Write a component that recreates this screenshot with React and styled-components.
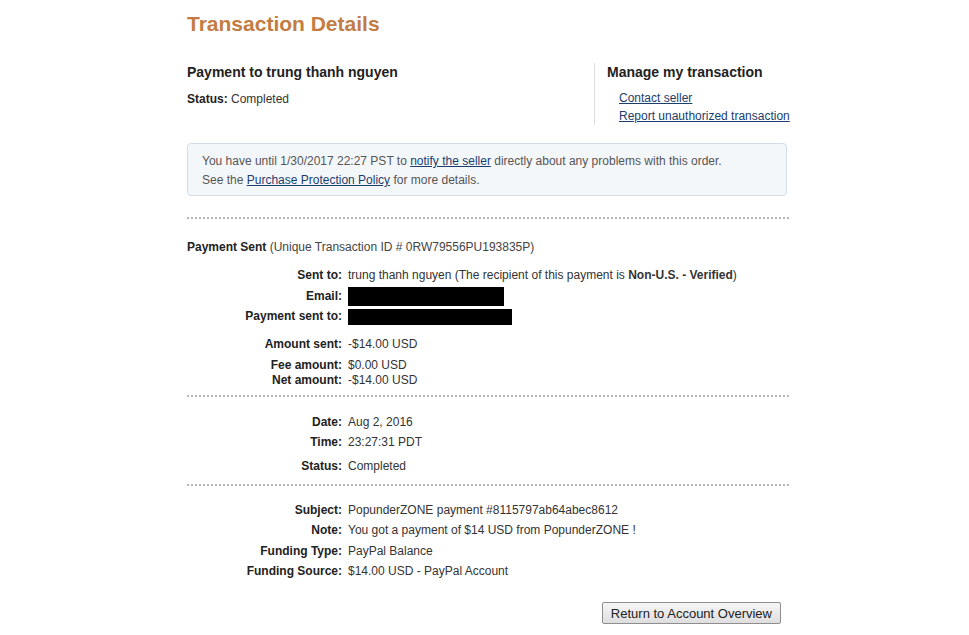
import React from "react";
import styled, { createGlobalStyle } from "styled-components";

const GlobalStyle = createGlobalStyle`
  body {
    margin: 0;
    background: #ffffff;
    font-family: "Liberation Sans", Arial, sans-serif;
    font-size: 12px;
    color: #333333;
  }
`;

// gap = space above the row, in px
const details = [
  {
    top: 12,
    bottom: 7,
    rows: [
      {
        label: "Sent to:",
        value: (
          <>
            trung thanh nguyen (The recipient of this payment is{" "}
            <b>Non-U.S. - Verified</b>)
          </>
        ),
      },
      { label: "Email:", redact: [156, 19], gap: 6 },
      { label: "Payment sent to:", redact: [164, 16], gap: 5 },
      { label: "Amount sent:", value: "-$14.00 USD", gap: 13 },
      { label: "Fee amount:", value: "$0.00 USD", gap: 6 },
      { label: "Net amount:", value: "-$14.00 USD", gap: 0 },
    ],
  },
  {
    top: 18,
    bottom: 10,
    rows: [
      { label: "Date:", value: "Aug 2, 2016" },
      { label: "Time:", value: "23:27:31 PDT", gap: 5 },
      { label: "Status:", value: "Completed", gap: 9 },
    ],
  },
  {
    top: 17,
    bottom: 0,
    rows: [
      { label: "Subject:", value: "PopunderZONE payment #8115797ab64abec8612" },
      { label: "Note:", value: "You got a payment of $14 USD from PopunderZONE !", gap: 5 },
      { label: "Funding Type:", value: "PayPal Balance", gap: 6 },
      { label: "Funding Source:", value: "$14.00 USD - PayPal Account", gap: 5 },
    ],
  },
];

function App() {
  return (
    <Page>
      <GlobalStyle />
      <Title>Transaction Details</Title>

      <Header>
        <Summary>
          <Heading>Payment to trung thanh nguyen</Heading>
          <StatusLine>
            <b>Status:</b> Completed
          </StatusLine>
        </Summary>
        <Manage>
          <Heading>Manage my transaction</Heading>
          <LinkList>
            <Link href="#">Contact seller</Link>
            <Link href="#">Report unauthorized transaction</Link>
          </LinkList>
        </Manage>
      </Header>

      <Notice>
        <p>
          You have until 1/30/2017 22:27 PST to <Link href="#">notify the seller</Link>{" "}
          directly about any problems with this order.
        </p>
        <p>
          See the <Link href="#">Purchase Protection Policy</Link> for more details.
        </p>
      </Notice>

      <Divider $space={21} />

      <SentTitle>
        <b>Payment Sent</b> (Unique Transaction ID # 0RW79556PU193835P)
      </SentTitle>

      {details.map((section, i) => (
        <React.Fragment key={i}>
          {i > 0 && <Divider $space={0} />}
          <Section $top={section.top} $bottom={section.bottom}>
            {section.rows.map((row) => (
              <Row key={row.label} $gap={row.gap || 0}>
                <Label>{row.label}</Label>
                {row.redact ? (
                  <Redacted style={{ width: row.redact[0], height: row.redact[1] }} />
                ) : (
                  <Value>{row.value}</Value>
                )}
              </Row>
            ))}
          </Section>
        </React.Fragment>
      ))}

      <Actions>
        <Button>Return to Account Overview</Button>
      </Actions>
    </Page>
  );
}

export default App;

const Page = styled.div`
  width: 602px;
  padding: 12px 0 0 187px;
`;

const Title = styled.h1`
  margin: 0;
  font-size: 21px;
  line-height: 24px;
  font-weight: bold;
  color: #c47c42;
`;

const Header = styled.div`
  display: flex;
  margin-top: 27px;
`;

const Summary = styled.div`
  flex: 1;
`;

const Manage = styled.div`
  box-sizing: border-box;
  width: 195px;
  border-left: 1px solid #dddddd;
  padding: 0 0 1px 12px;
`;

const Heading = styled.h2`
  margin: 0;
  font-size: 14px;
  line-height: 18px;
  font-weight: bold;
  color: #222222;
  white-space: nowrap;
`;

const StatusLine = styled.div`
  margin-top: 11px;
  line-height: 14px;
  color: #333333;

  b {
    color: #222222;
  }
`;

const LinkList = styled.div`
  display: flex;
  flex-direction: column;
  align-items: flex-start;
  gap: 3px;
  margin-top: 10px;
  padding-left: 12px;
  line-height: 15px;
  white-space: nowrap;
`;

const Link = styled.a`
  color: #1a3d6d;
  text-decoration: underline;
`;

const Notice = styled.div`
  margin-top: 18px;
  box-sizing: border-box;
  width: 600px;
  padding: 8px 0 5px 14px;
  background: #f4f7fa;
  border: 1px solid #d3dde7;
  border-radius: 4px;
  color: #555555;

  p {
    margin: 0;
    line-height: 19px;
  }
`;

const Divider = styled.div`
  margin-top: ${(p) => p.$space}px;
  border-top: 2px dotted #b5b5b5;
`;

const SentTitle = styled.div`
  margin-top: 19px;
  line-height: 18px;
  color: #444444;

  b {
    color: #222222;
  }
`;

const Section = styled.div`
  padding: ${(p) => p.$top}px 0 ${(p) => p.$bottom}px;
`;

const Row = styled.div`
  display: grid;
  grid-template-columns: 155px 1fr;
  column-gap: 6px;
  align-items: center;
  height: 15px;
  line-height: 15px;
  margin-top: ${(p) => p.$gap}px;
`;

const Label = styled.span`
  text-align: right;
  font-weight: bold;
  color: #222222;
`;

const Value = styled.span`
  color: #333333;
  white-space: nowrap;
`;

const Redacted = styled.span`
  display: block;
  align-self: center;
  margin: -4px 0;
  background: #000000;
`;

const Actions = styled.div`
  display: flex;
  justify-content: flex-end;
  padding: 23px 8px 0 0;
`;

const Button = styled.button`
  height: 22px;
  padding: 0 8px;
  font-family: "Liberation Sans", Arial, sans-serif;
  font-size: 13px;
  color: #222222;
  background: linear-gradient(#f6f6f6, #dedede);
  border: 1px solid #8e8e8e;
  border-radius: 2px;
`;
